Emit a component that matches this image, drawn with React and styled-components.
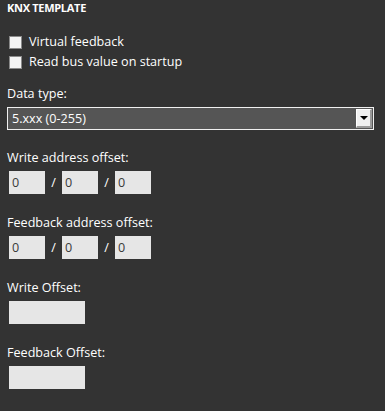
import React from 'react';
import styled, { createGlobalStyle } from 'styled-components';

const GlobalStyle = createGlobalStyle`
  html, body {
    margin: 0;
    padding: 0;
    background: #333333;
  }
  body {
    font-family: "Open Sans", "Noto Sans", sans-serif;
    color: #ffffff;
  }
`;

const Panel = styled.div`
  width: 385px;
  height: 411px;
  box-sizing: border-box;
  padding: 1px 11px 0 7px;
  background: #333333;
`;

const Title = styled.div`
  font-size: 11px;
  font-weight: 700;
  letter-spacing: -0.3px;
  line-height: 14px;
  height: 14px;
`;

const CheckList = styled.div`
  display: flex;
  flex-direction: column;
  gap: 4px;
  margin-top: 19px;
  padding-left: 2px;
`;

const CheckRow = styled.label`
  display: flex;
  align-items: center;
  gap: 7px;
  font-size: 12.6px;
  line-height: 16px;
`;

const Box = styled.span`
  width: 11px;
  height: 11px;
  border: 1px solid #8a8a8a;
  background: #f4f4f4;
  flex-shrink: 0;
`;

const Field = styled.div`
  margin-top: ${p => p.$top}px;
`;

const Label = styled.div`
  font-size: 12.6px;
  line-height: 16px;
  height: 16px;
  margin-bottom: 5px;
`;

const Select = styled.div`
  height: 23px;
  box-sizing: border-box;
  border: 1px solid #f0f0f0;
  background: #555555;
  display: flex;
  align-items: center;
  justify-content: space-between;
  padding: 0 1px 0 4px;
  font-size: 12.6px;
`;

const DropButton = styled.div`
  width: 16px;
  height: 19px;
  box-sizing: border-box;
  background: #f0f0f0;
  border-right: 2px solid #9a9a9a;
  border-bottom: 2px solid #9a9a9a;
  border-top: 1px solid #ffffff;
  border-left: 1px solid #ffffff;
  display: flex;
  align-items: center;
  justify-content: center;
`;

const Triangle = styled.span`
  width: 0;
  height: 0;
  border-left: 4px solid transparent;
  border-right: 4px solid transparent;
  border-top: 4px solid #000000;
`;

const AddressRow = styled.div`
  display: flex;
  align-items: center;
  padding-left: 2px;
`;

const Input = styled.div`
  width: ${p => p.$w}px;
  height: 23px;
  box-sizing: border-box;
  background: #e6e6e6;
  color: #3a3a3a;
  font-size: 12.6px;
  line-height: 23px;
  padding-left: 3px;
`;

const Slash = styled.span`
  width: 17px;
  text-align: center;
  font-size: 12.6px;
`;

const Address = () => (
  <AddressRow>
    <Input $w={36}>0</Input>
    <Slash>/</Slash>
    <Input $w={36}>0</Input>
    <Slash>/</Slash>
    <Input $w={36}>0</Input>
  </AddressRow>
);

export default function App() {
  return (
    <>
      <GlobalStyle />
      <Panel>
        <Title>KNX TEMPLATE</Title>
        <CheckList>
          <CheckRow><Box />Virtual feedback</CheckRow>
          <CheckRow><Box />Read bus value on startup</CheckRow>
        </CheckList>
        <Field $top={16}>
          <Label>Data type:</Label>
          <Select>
            5.xxx (0-255)
            <DropButton><Triangle /></DropButton>
          </Select>
        </Field>
        <Field $top={20}>
          <Label>Write address offset:</Label>
          <Address />
        </Field>
        <Field $top={21}>
          <Label>Feedback address offset:</Label>
          <Address />
        </Field>
        <Field $top={21}>
          <Label>Write Offset:</Label>
          <AddressRow><Input $w={76} /></AddressRow>
        </Field>
        <Field $top={21}>
          <Label>Feedback Offset:</Label>
          <AddressRow><Input $w={76} /></AddressRow>
        </Field>
      </Panel>
    </>
  );
}
